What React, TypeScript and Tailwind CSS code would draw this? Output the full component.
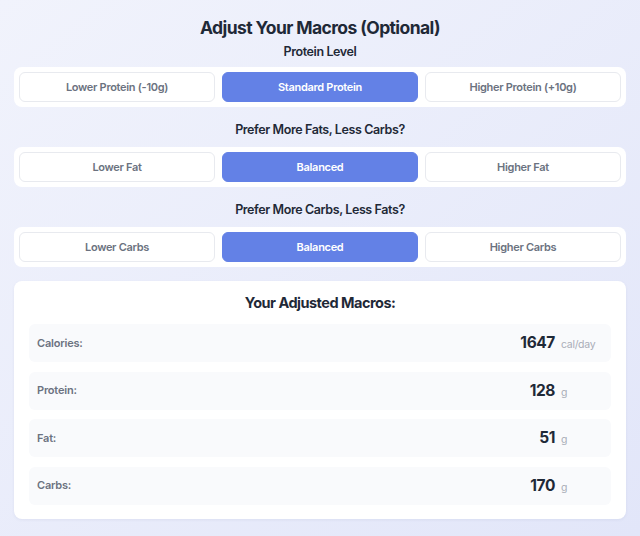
import { useState } from "react"

interface OptionGroup {
  label: string
  options: string[]
}

const groups: OptionGroup[] = [
  {
    label: "Protein Level",
    options: ["Lower Protein (-10g)", "Standard Protein", "Higher Protein (+10g)"],
  },
  {
    label: "Prefer More Fats, Less Carbs?",
    options: ["Lower Fat", "Balanced", "Higher Fat"],
  },
  {
    label: "Prefer More Carbs, Less Fats?",
    options: ["Lower Carbs", "Balanced", "Higher Carbs"],
  },
]

const macros = [
  { label: "Calories:", value: "1647", unit: "cal/day" },
  { label: "Protein:", value: "128", unit: "g" },
  { label: "Fat:", value: "51", unit: "g" },
  { label: "Carbs:", value: "170", unit: "g" },
]

export default function App() {
  const [selected, setSelected] = useState<number[]>([1, 1, 1])

  return (
    <div
      className="min-h-[536px] w-[640px] bg-gradient-to-br from-[#f1f3fc] to-[#e2e6f9] px-[14px] pt-[15px] pb-[18px] text-[#1f2937]"
      style={{ fontFamily: "Inter, 'Liberation Sans', sans-serif" }}
    >
      <h1 className="text-center text-[17.5px] font-bold leading-[26px] tracking-[-0.6px]">
        Adjust Your Macros (Optional)
      </h1>

      {groups.map((group, gi) => (
        <div key={gi} className={gi === 0 ? "mt-[2px]" : "mt-[14px]"}>
          <h2 className="text-center text-[12.5px] font-semibold leading-[18px] tracking-[-0.4px]">
            {group.label}
          </h2>
          <div className={`${gi === 0 ? "mt-[6px]" : "mt-[8px]"} grid grid-cols-3 gap-[7px] rounded-lg bg-white p-[5px]`}>
            {group.options.map((opt, oi) => {
              const active = selected[gi] === oi
              return (
                <button
                  key={oi}
                  onClick={() => setSelected(selected.map((s, i) => (i === gi ? oi : s)))}
                  className={
                    active
                      ? "h-[30px] rounded-md border border-[#6381e6] bg-[#6381e6] text-[11px] font-semibold tracking-[-0.3px] text-white"
                      : "h-[30px] rounded-md border border-[#e8eaef] bg-white text-[11px] font-semibold tracking-[-0.3px] text-[#6b7280]"
                  }
                >
                  {opt}
                </button>
              )
            })}
          </div>
        </div>
      ))}

      <div className="mt-[14px] rounded-lg bg-white px-[15px] pt-[12px] pb-[14px] shadow-[0_1px_3px_rgba(80,90,140,0.08)]">
        <h3 className="text-center text-[14.5px] font-bold leading-[20px] tracking-[-0.5px]">
          Your Adjusted Macros:
        </h3>
        <div className="mt-[11px] flex flex-col gap-[9.5px]">
          {macros.map((m) => (
            <div
              key={m.label}
              className="flex h-[38px] items-center justify-between rounded-md bg-[#f9fafc] pl-[8px] pr-[10px]"
            >
              <span className="text-[11px] font-semibold tracking-[-0.2px] text-[#6b7280]">{m.label}</span>
              <div className="flex items-baseline">
                <span className="text-[15.5px] font-bold tracking-[-0.4px] text-[#1f2937]">{m.value}</span>
                <span className="ml-[6px] w-[40px] text-left text-[10.5px] tracking-[-0.3px] text-[#a9adb8]">{m.unit}</span>
              </div>
            </div>
          ))}
        </div>
      </div>
    </div>
  )
}
